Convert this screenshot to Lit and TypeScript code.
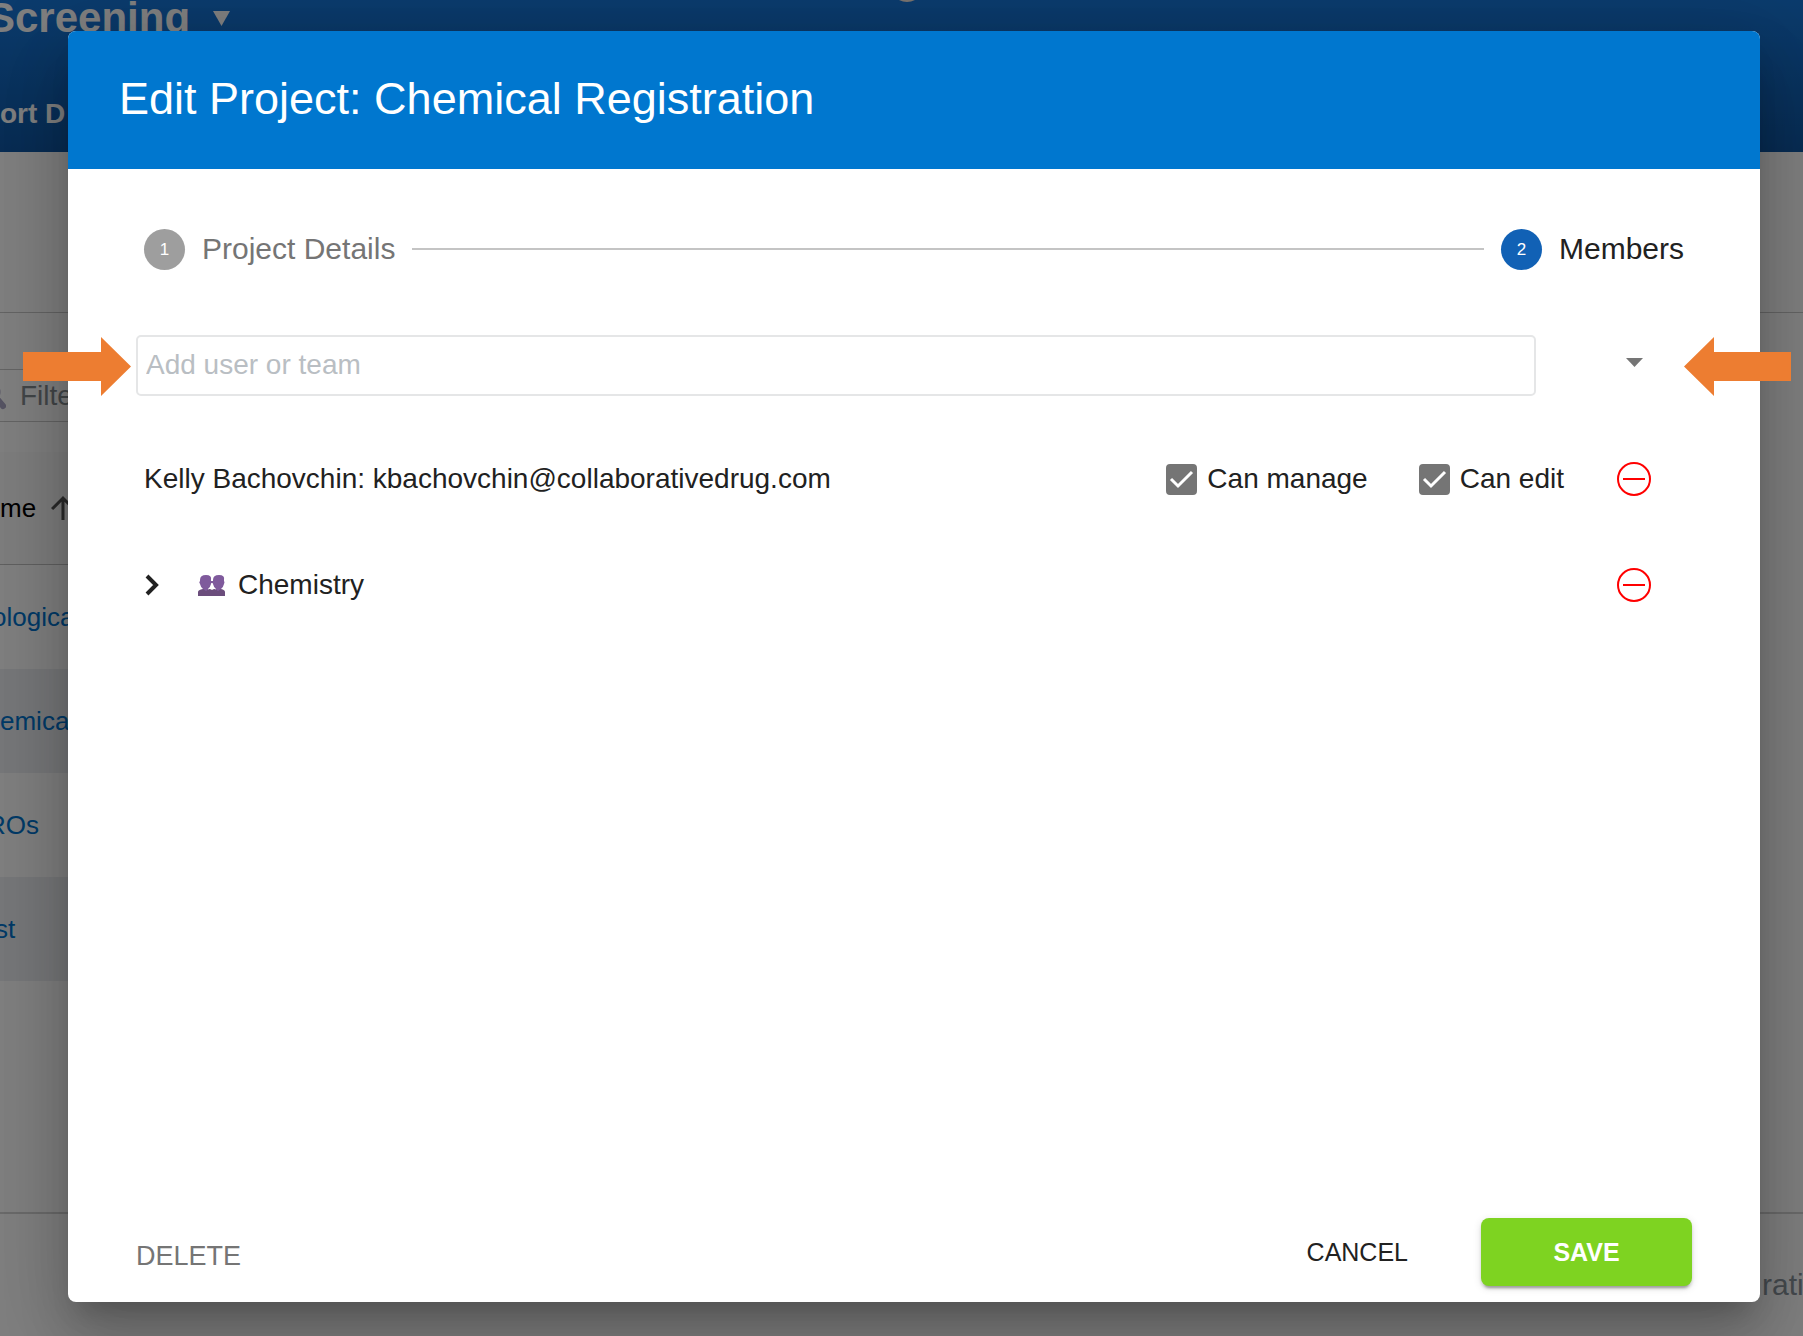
import { LitElement, html, css, svg, nothing } from "lit";
import { customElement, property, state } from "lit/decorators.js";

interface Member {
  id: string;
  label: string;
  team: boolean;
}

const members: Member[] = [
  { id: "kelly", label: "Kelly Bachovchin: kbachovchin@collaborativedrug.com", team: false },
  { id: "chemistry", label: "Chemistry", team: true },
];

const font = css`"Liberation Sans", Arial, Helvetica, sans-serif`;

/** The projects list that lies dimmed behind the dialog. */
@customElement("project-page")
export class ProjectPage extends LitElement {
  static styles = css`
    :host {
      display: flex;
      flex-direction: column;
      overflow: hidden;
      background: #fff;
      font-family: ${font};
    }
    .top {
      display: flex;
      flex-direction: column;
      justify-content: space-between;
      height: 152px;
      box-sizing: border-box;
      padding-bottom: 22px;
      background: linear-gradient(#1777da, #1058a6);
      color: #fff;
      overflow: hidden;
    }
    .brand-row {
      display: flex;
      align-items: flex-start;
    }
    .brand {
      display: flex;
      align-items: center;
      gap: 23px;
      margin: -6px 0 0 -13px;
      padding: 0;
      border: 0;
      background: none;
      color: inherit;
      font: 700 42px/48px ${font};
    }
    .mark {
      margin-left: 668px;
    }
    .tabs {
      font-size: 28px;
      font-weight: 700;
      line-height: 32px;
    }
    .tabs a {
      color: inherit;
      text-decoration: none;
    }
    .band {
      height: 160px;
      border-bottom: 1px solid #c8c8c8;
    }
    .list {
      flex: 1;
      padding-right: 80px;
    }
    .filter {
      display: flex;
      align-items: center;
      gap: 14px;
      height: 51px;
      margin: 56px 0 30px;
      border: solid #c8c8c8;
      border-width: 1px 0;
      color: #858c91;
      font-size: 28px;
      line-height: 32px;
    }
    .filter svg {
      margin-left: -18px;
    }
    .projects {
      width: 100%;
      border-collapse: collapse;
      font-size: 26px;
      line-height: 32px;
      text-align: left;
    }
    .projects th {
      height: 112px;
      padding: 0;
      border-bottom: 1px solid #c0c0c0;
      background: #fafafa;
      font-weight: 400;
    }
    .heading {
      display: flex;
      align-items: center;
      gap: 9px;
    }
    .projects td {
      height: 104px;
      padding: 0;
    }
    .projects tr:nth-child(even) td {
      background: #eceff2;
    }
    .projects a {
      color: #0074cf;
      text-decoration: none;
    }
    .cut-s { margin-left: -5px; }
    .cut-m { margin-left: -8px; }
    .cut-l { margin-left: -13px; }
    .foot {
      display: flex;
      justify-content: flex-end;
      height: 82px;
      padding-top: 40px;
      border-top: 2px solid #d4d4d4;
      color: #8a949c;
      font-size: 30px;
      line-height: 62px;
    }
    .foot span {
      width: 41px;
      white-space: nowrap;
    }
  `;

  render() {
    const rows = [
      ["ological", "cut-m"],
      ["emical", ""],
      ["ROs", "cut-l"],
      ["st", "cut-s"],
    ];
    return html`
      <header class="top">
        <div class="brand-row">
          <button class="brand">
            Screening
            <svg width="17" height="15" viewBox="0 0 17 15"><path d="M0 0h17L8.500 15z" fill="currentColor" /></svg>
          </button>
          <svg class="mark" width="18" height="3" viewBox="0 0 18 3"><path d="M1 0h16q-4 2-8 2T1 0z" fill="#f2e6dc" /></svg>
        </div>
        <nav class="tabs"><a href="#data">ort D</a></nav>
      </header>
      <div class="band"></div>
      <main class="list">
        <div class="filter">
          <svg width="24" height="28" viewBox="0 0 24 28">
            <circle cx="9" cy="10" r="8" fill="none" stroke="#aaa6c4" stroke-width="3" />
            <path d="M16 18l5 6" stroke="#aaa6c4" stroke-width="6" stroke-linecap="round" />
          </svg>
          <span>Filter</span>
        </div>
        <table class="projects">
          <thead>
            <tr>
              <th scope="col">
                <span class="heading">
                  me
                  <svg width="36" height="36" viewBox="0 0 24 24">
                    <path d="M4 12l1.410 1.410L11 7.830V20h2V7.830l5.580 5.590L20 12l-8-8z" fill="#555" />
                  </svg>
                </span>
              </th>
            </tr>
          </thead>
          <tbody>
            ${rows.map(([name, cut]) => html`<tr><td><a class=${cut} href="#project">${name}</a></td></tr>`)}
          </tbody>
        </table>
      </main>
      <footer class="foot"><span>ration</span></footer>
    `;
  }
}

/** Two-step progress header of the dialog. */
@customElement("project-steps")
export class ProjectSteps extends LitElement {
  @property({ type: Number }) active = 2;

  static styles = css`
    :host {
      display: block;
    }
    .steps {
      display: flex;
      align-items: center;
      gap: 17px;
      margin: 0;
      padding: 0 8px;
      list-style: none;
    }
    .step {
      display: flex;
      align-items: center;
      gap: 17px;
      color: #757575;
      font-size: 30px;
      line-height: 42px;
    }
    .number {
      display: grid;
      place-items: center;
      box-sizing: border-box;
      width: 41px;
      height: 41px;
      padding-top: 2px;
      border-radius: 50%;
      background: #9e9e9e;
      color: #fff;
      font-size: 17px;
      line-height: 20px;
    }
    .current {
      color: #212121;
    }
    .current .number {
      background: #1161b5;
    }
    .line {
      flex: 1;
      height: 2px;
      background: #c4c4c4;
    }
  `;

  render() {
    const step = (n: number, label: string) => html`
      <li class="step ${n === this.active ? "current" : ""}" aria-current=${n === this.active ? "step" : nothing}>
        <span class="number">${n}</span>${label}
      </li>
    `;
    return html`
      <ol class="steps">
        ${step(1, "Project Details")}
        <li class="line" role="presentation"></li>
        ${step(2, "Members")}
      </ol>
    `;
  }
}

/** One user or team that belongs to the project. */
@customElement("member-row")
export class MemberRow extends LitElement {
  @property({ attribute: false }) member!: Member;

  static styles = css`
    :host {
      display: grid;
      grid-template-columns: 1fr auto 116px;
      column-gap: 12px;
      align-items: center;
      height: 106px;
      padding-left: 8px;
      color: #212121;
      font-size: 28px;
      line-height: 32px;
    }
    .name {
      display: flex;
      align-items: center;
    }
    .rights {
      display: flex;
      gap: 51px;
    }
    .right {
      display: flex;
      align-items: center;
      gap: 10px;
    }
    .tick {
      display: grid;
    }
    .tick > * {
      grid-area: 1 / 1;
    }
    .box {
      appearance: none;
      width: 31px;
      height: 31px;
      margin: 0;
      border-radius: 4px;
      border: 3px solid #757575;
    }
    .box:checked {
      background: #757575;
    }
    .check {
      visibility: hidden;
      pointer-events: none;
    }
    .box:checked + .check {
      visibility: visible;
    }
    .icon {
      display: grid;
      place-items: center;
      padding: 0;
      border: 0;
      background: none;
      color: inherit;
      cursor: pointer;
    }
    .expand {
      width: 16px;
      height: 32px;
      margin-right: 38px;
    }
    .people {
      margin-right: 12px;
    }
    .remove {
      justify-self: center;
    }
  `;

  private right(id: string, label: string) {
    return html`
      <label class="right" for=${id}>
        <span class="tick">
          <input class="box" id=${id} type="checkbox" checked />
          <svg class="check" width="31" height="31" viewBox="0 0 31 31">
            <path d="M5 15l7 7L26 8" fill="none" stroke="#fff" stroke-width="3" />
          </svg>
        </span>
        ${label}
      </label>
    `;
  }

  render() {
    const { label, team } = this.member;
    return html`
      <div class="name">
        ${team
          ? html`
              <button class="icon expand" aria-label="Expand">
                <svg width="16" height="22" viewBox="0 0 16 22">
                  <path d="M3 2l9 9-9 9" fill="none" stroke="#212121" stroke-width="4" />
                </svg>
              </button>
              <svg class="people" width="28" height="22" viewBox="0 0 28 22">
                ${[0, 13].map(
                  (x) => svg`
                    <g transform="translate(${x} 0)">
                      <path d="M2 6q0-5 6-5t5 5v1q1 1 0 3-1 4-3 5v3H5v-3q-2-1-3-5-1.500-2 0-3z" fill="#7f5a9c" />
                    </g>`
                )}
                <path d="M12 7h4v2h-4z" fill="#7f5a9c" />
                <path d="M0 22v-4q0-2 5-3l3 2 3-2q2 0 3 1 1-1 3-1l3 2 3-2q4 1 4 3v4z" fill="#6b4d7c" />
              </svg>
            `
          : nothing}
        <span>${label}</span>
      </div>
      <div class="rights">
        ${team ? nothing : [this.right("manage", "Can manage"), this.right("edit", "Can edit")]}
      </div>
      <button class="icon remove" aria-label="Remove">
        <svg width="34" height="36" viewBox="0 0 34 36">
          <ellipse cx="17" cy="18" rx="16" ry="16" fill="none" stroke="#f00" stroke-width="2" />
          <path d="M6 18h22" stroke="#f00" stroke-width="2" />
        </svg>
      </button>
    `;
  }
}

@customElement("app-root")
export class AppRoot extends LitElement {
  @state() private query = "";

  static styles = css`
    :host {
      display: grid;
      min-height: 100vh;
      font-family: ${font};
    }
    .page,
    .backdrop {
      grid-area: 1 / 1;
      min-width: 0;
    }
    .backdrop {
      display: grid;
      z-index: 1;
      padding: 31px 43px 34px 68px;
      background: rgba(0, 0, 0, 0.5);
      overflow: hidden;
    }
    .dialog {
      display: flex;
      flex-direction: column;
      border-radius: 8px;
      background: #fff;
      box-shadow:
        0 19px 26px -12px rgba(0, 0, 0, 0.2),
        0 41px 65px 5px rgba(0, 0, 0, 0.14),
        0 15px 78px 14px rgba(0, 0, 0, 0.12);
    }
    .title {
      margin: 0;
      padding: 42px 51px 44px;
      border-radius: 8px 8px 0 0;
      background: #0077cf;
      color: #fff;
      font-size: 45px;
      font-weight: 400;
      line-height: 52px;
    }
    .content {
      flex: 1;
      padding: 59px 68px 0;
    }
    .add {
      position: relative;
      display: grid;
      grid-template-columns: 1fr 116px;
      column-gap: 40px;
      align-items: center;
      margin: 65px 0 30px;
    }
    .field {
      box-sizing: border-box;
      width: 100%;
      height: 61px;
      padding: 0 8px 2px;
      border: 2px solid #e5e6e7;
      border-radius: 5px;
      color: #212121;
      font: 28px/32px ${font};
    }
    .field::placeholder {
      color: #b9bec3;
      opacity: 1;
    }
    .open {
      display: grid;
      place-items: center;
      justify-self: center;
      width: 40px;
      height: 40px;
      margin-bottom: 6px;
      padding: 0;
      border: 0;
      background: none;
    }
    .pointer {
      position: absolute;
      top: 2px;
    }
    .pointer-left {
      left: -113px;
    }
    .pointer-right {
      right: -99px;
    }
    .actions {
      display: flex;
      align-items: center;
      padding: 0 68px 16px;
    }
    .action {
      padding: 0;
      border: 0;
      background: none;
      color: #212121;
      font: 25px/32px ${font};
      cursor: pointer;
    }
    .delete {
      margin-right: auto;
      padding-top: 8px;
      color: #757575;
      font-size: 27px;
    }
    .save {
      width: 211px;
      height: 68px;
      margin-left: 73px;
      border-radius: 8px;
      background: #7ed321;
      box-shadow:
        0 5px 2px -3px rgba(0, 0, 0, 0.2),
        0 3px 3px rgba(0, 0, 0, 0.14),
        0 2px 9px rgba(0, 0, 0, 0.12);
      color: #fff;
      font-weight: 700;
    }
  `;

  render() {
    return html`
      <project-page class="page" inert></project-page>
      <div class="backdrop">
        <section class="dialog" role="dialog" aria-modal="true" aria-labelledby="title">
          <h2 class="title" id="title">Edit Project: Chemical Registration</h2>
          <div class="content">
            <project-steps .active=${2}></project-steps>
            <div class="add">
              <input
                class="field"
                type="text"
                aria-label="Add user or team"
                placeholder="Add user or team"
                .value=${this.query}
                @input=${(e: Event) => (this.query = (e.target as HTMLInputElement).value)}
              />
              <button class="open" aria-label="Show users and teams">
                <svg width="17" height="9" viewBox="0 0 17 9"><path d="M0 0h17L8.500 9z" fill="#757575" /></svg>
              </button>
              <svg class="pointer pointer-left" width="108" height="59" viewBox="0 0 108 59">
                <path d="M0 15h78V0l30 29.500L78 59V44H0z" fill="#ed7d31" />
              </svg>
              <svg class="pointer pointer-right" width="107" height="59" viewBox="0 0 107 59">
                <path d="M107 15H30V0L0 29.500 30 59V44h77z" fill="#ed7d31" />
              </svg>
            </div>
            ${members.map((m) => html`<member-row .member=${m}></member-row>`)}
          </div>
          <div class="actions">
            <button class="action delete">DELETE</button>
            <button class="action">CANCEL</button>
            <button class="action save">SAVE</button>
          </div>
        </section>
      </div>
    `;
  }
}
